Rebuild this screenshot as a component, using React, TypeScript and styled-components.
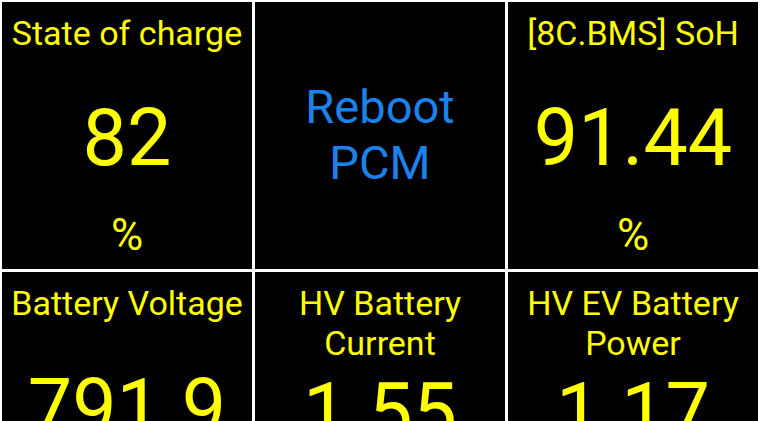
import styled, { createGlobalStyle } from 'styled-components';

const Global = createGlobalStyle`
html, body {
  margin: 0;
  padding: 0;
  background: #ffffff;
  overflow: hidden;
}
body {
  font-family: Roboto, "Noto Sans", "Liberation Sans", sans-serif;
}
`;

const Board = styled.div`
  display: grid;
  grid-template-columns: repeat(3, 1fr);
  grid-auto-rows: 267px;
  gap: 3px;
  padding: 2px;
  width: 760px;
  box-sizing: border-box;
  background: #ffffff;
`;

const Tile = styled.div`
  display: grid;
  grid-template-rows: 1fr auto 1fr;
  background: #000000;
  color: #ffff00;
  text-align: center;
  overflow: hidden;
`;

const Title = styled.div`
  align-self: start;
  padding: 11px 4px 0;
  font-size: 34px;
  line-height: 40px;
`;

const Value = styled.div`
  font-size: 79px;
  line-height: 90px;
  padding-top: 4px;
`;

const Unit = styled.div`
  align-self: end;
  padding-bottom: 8px;
  font-size: 44px;
  line-height: 52px;
`;

const ActionTile = styled.div`
  display: flex;
  align-items: center;
  justify-content: center;
  background: #000000;
  color: #1c82eb;
  text-align: center;
  font-size: 47px;
  line-height: 56px;
  padding-bottom: 2px;
`;

type Gauge = { title: string; value: string; unit?: string };

const gauges: (Gauge | 'reboot')[] = [
  { title: 'State of charge', value: '82', unit: '%' },
  'reboot',
  { title: '[8C.BMS] SoH', value: '91.44', unit: '%' },
  { title: 'Battery Voltage', value: '791.9', unit: 'V' },
  { title: 'HV Battery Current', value: '1.55', unit: 'A' },
  { title: 'HV EV Battery Power', value: '1.17', unit: 'kW' },
];

const titleLines: Record<string, string[]> = {
  'HV Battery Current': ['HV Battery', 'Current'],
  'HV EV Battery Power': ['HV EV Battery', 'Power'],
};

export default function App() {
  return (
    <>
      <Global />
      <Board>
        {gauges.map((g, i) =>
          g === 'reboot' ? (
            <ActionTile key={i}>
              Reboot
              <br />
              PCM
            </ActionTile>
          ) : (
            <Tile key={i}>
              <Title>
                {(titleLines[g.title] || [g.title]).map((l, j) => (
                  <div key={j}>{l}</div>
                ))}
              </Title>
              <Value>{g.value}</Value>
              <Unit>{g.unit}</Unit>
            </Tile>
          )
        )}
      </Board>
    </>
  );
}
